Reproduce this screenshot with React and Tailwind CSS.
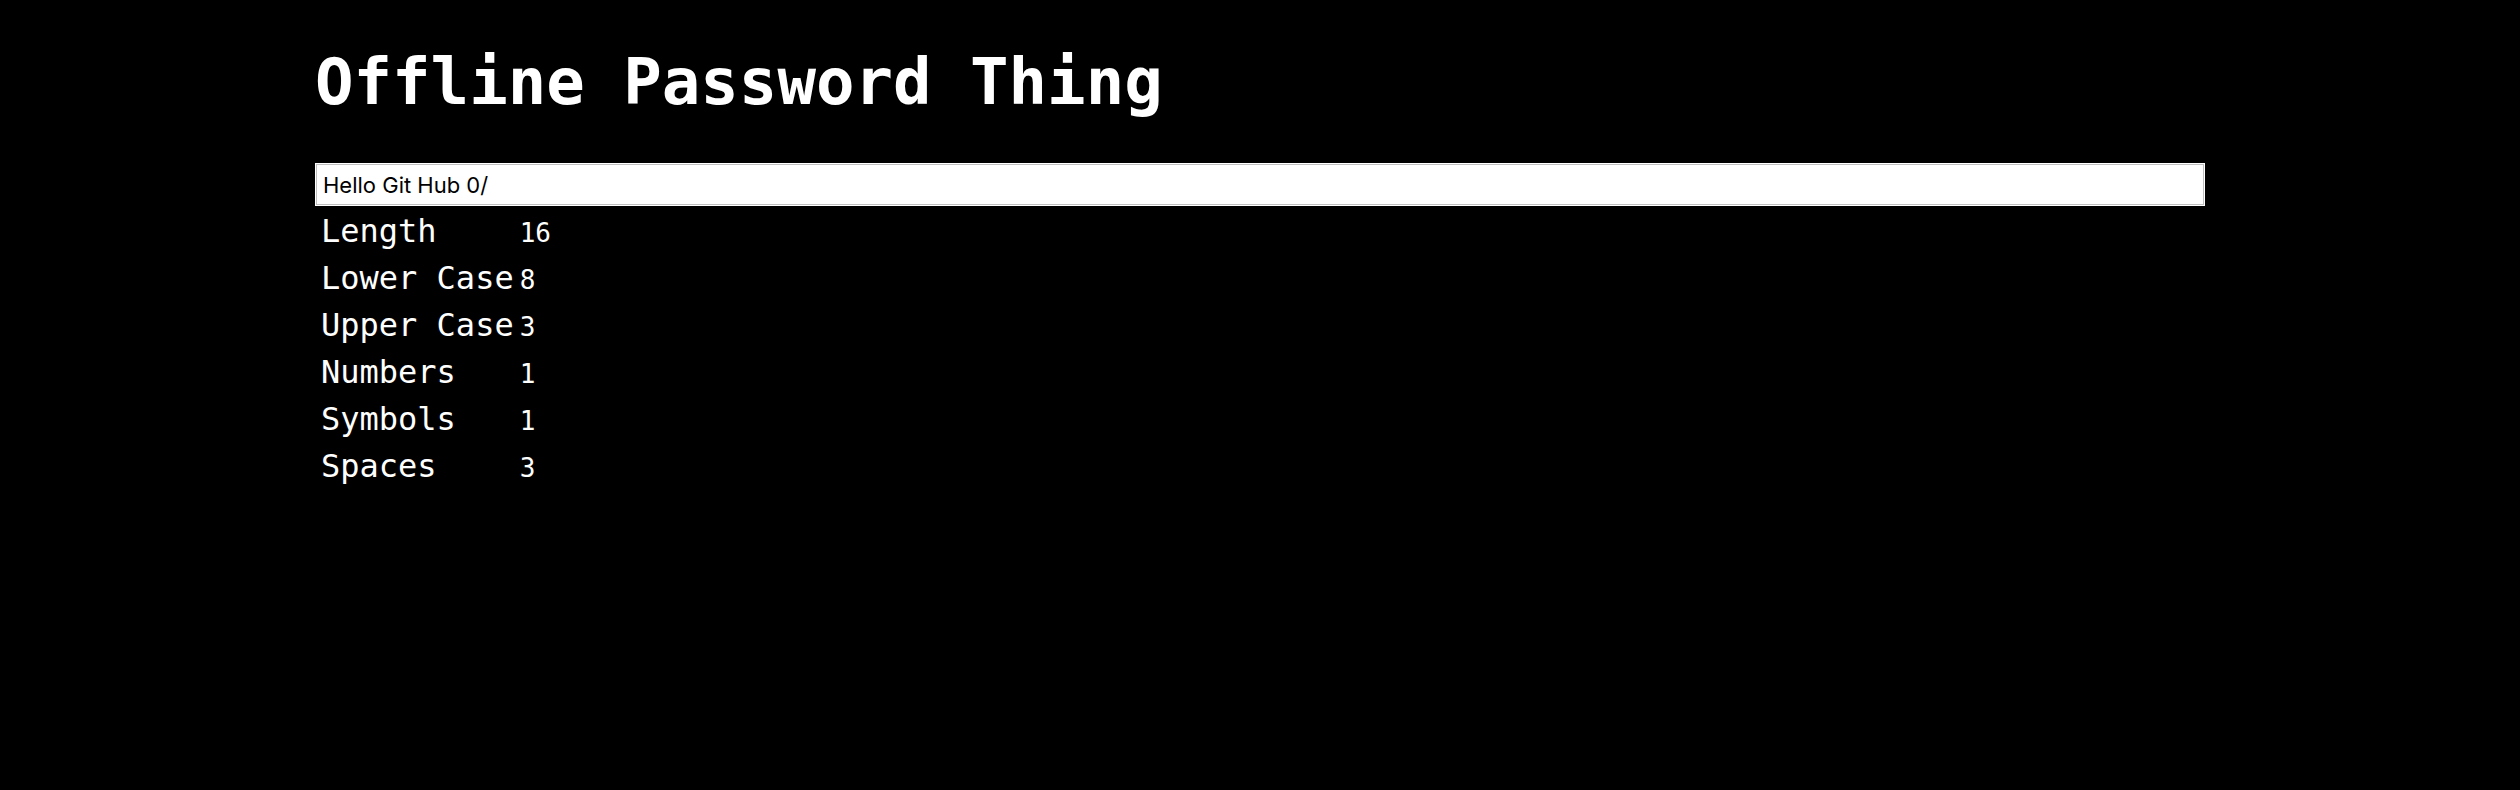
import { useState } from "react";

const count = (text, pattern) => (text.match(pattern) || []).length;

export default function App() {
  const [password, setPassword] = useState("Hello Git Hub 0/");
  const rows = [
    ["Length", password.length],
    ["Lower Case", count(password, /[a-z]/g)],
    ["Upper Case", count(password, /[A-Z]/g)],
    ["Numbers", count(password, /[0-9]/g)],
    ["Symbols", count(password, /[^a-zA-Z0-9\s]/g)],
    ["Spaces", count(password, /\s/g)],
  ];

  return (
    <div className="min-h-screen bg-black font-['DejaVu_Sans_Mono',monospace] text-white">
      <main className="mx-auto w-3/4 pt-[42px]">
        <h1 className="text-[64px] leading-20 font-bold">Offline Password Thing</h1>
        <div className="mt-[41px] border border-white">
          <input
            aria-label="Password"
            type="text"
            value={password}
            onChange={(e) => setPassword(e.target.value)}
            className="block h-[41px] w-full border border-[#bfbfbf] bg-white px-1.5 font-['Inter',sans-serif] text-[22px] text-black"
          />
        </div>
        <table className="mt-0.5 border-collapse">
          <tbody>
            {rows.map(([label, value]) => (
              <tr key={label} className="h-[47px] align-baseline">
                <th scope="row" className="px-1.5 text-left text-[32px] leading-[47px] font-normal">{label}</th>
                <td className="text-[26px] leading-10">{value}</td>
              </tr>
            ))}
          </tbody>
        </table>
      </main>
    </div>
  );
}
